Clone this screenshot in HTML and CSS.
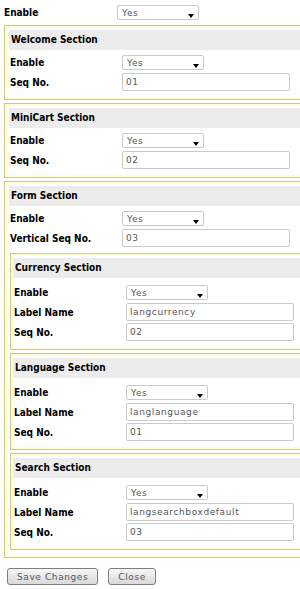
FILE: index.html
```html
<!DOCTYPE html>
<html lang="en">
<head>
  <meta charset="UTF-8">
  <title>Header Settings</title>
  <link rel="stylesheet" href="styles.css">
</head>
<body>
  <div class="page">
    <div class="row top">
      <label>Enable</label>
      <span class="select"><select><option>Yes</option></select></span>
    </div>

    <div class="section">
      <div class="band">Welcome Section</div>
      <div class="row">
        <label>Enable</label>
        <span class="select"><select><option>Yes</option></select></span>
      </div>
      <div class="row">
        <label>Seq No.</label>
        <input type="text" value="01">
      </div>
    </div>

    <div class="section">
      <div class="band">MiniCart Section</div>
      <div class="row">
        <label>Enable</label>
        <span class="select"><select><option>Yes</option></select></span>
      </div>
      <div class="row">
        <label>Seq No.</label>
        <input type="text" value="02">
      </div>
    </div>

    <div class="section">
      <div class="band">Form Section</div>
      <div class="row">
        <label>Enable</label>
        <span class="select"><select><option>Yes</option></select></span>
      </div>
      <div class="row">
        <label>Vertical Seq No.</label>
        <input type="text" value="03">
      </div>

      <div class="section sub">
        <div class="band">Currency Section</div>
        <div class="row">
          <label>Enable</label>
          <span class="select"><select><option>Yes</option></select></span>
        </div>
        <div class="row">
          <label>Label Name</label>
          <input type="text" value="langcurrency">
        </div>
        <div class="row">
          <label>Seq No.</label>
          <input type="text" value="02">
        </div>
      </div>

      <div class="section sub">
        <div class="band">Language Section</div>
        <div class="row">
          <label>Enable</label>
          <span class="select"><select><option>Yes</option></select></span>
        </div>
        <div class="row">
          <label>Label Name</label>
          <input type="text" value="langlanguage">
        </div>
        <div class="row">
          <label>Seq No.</label>
          <input type="text" value="01">
        </div>
      </div>

      <div class="section sub">
        <div class="band">Search Section</div>
        <div class="row">
          <label>Enable</label>
          <span class="select"><select><option>Yes</option></select></span>
        </div>
        <div class="row">
          <label>Label Name</label>
          <input type="text" value="langsearchboxdefault">
        </div>
        <div class="row">
          <label>Seq No.</label>
          <input type="text" value="03">
        </div>
      </div>
    </div>

    <div class="buttons">
      <button type="button">Save Changes</button>
      <button type="button">Close</button>
    </div>
  </div>
</body>
</html>
```

FILE: styles.css
```css
html {
  overflow: hidden;
}

body {
  margin: 0;
  background-color: #fff;
  font-family: "DejaVu Sans Condensed", "DejaVu Sans", sans-serif;
}

.page {
  width: 310px;
  padding: 2px 0 0 4px;
}

.row {
  display: flex;
  align-items: center;
  height: 20px;
  padding-left: 1px;
}

.row label {
  width: 112px;
  flex: none;
  font-size: 10px;
  font-weight: bold;
  font-stretch: condensed;
  color: #000;
}

.row.top {
  padding-left: 0;
}

.row.top label {
  width: 113px;
}

.select {
  position: relative;
  display: inline-block;
}

.select::after {
  content: "";
  position: absolute;
  right: 5px;
  top: 9px;
  border-left: 3.5px solid transparent;
  border-right: 3.5px solid transparent;
  border-top: 4px solid #000;
}

select,
input {
  box-sizing: border-box;
  font-family: "DejaVu Sans", sans-serif;
  font-size: 9px;
  letter-spacing: 0.6px;
  color: #555;
  background-color: #fff;
  border: 1px solid #c9c9c9;
  border-radius: 2px;
  outline: none;
  margin: 0;
}

select {
  -webkit-appearance: none;
  appearance: none;
  display: block;
  width: 82px;
  height: 15px;
  padding: 1px 4px 0;
  line-height: 12px;
}

input {
  width: 168px;
  height: 18px;
  padding: 0 3px;
}

.section {
  margin-top: 3px;
  padding: 4px 4px 7px 4px;
  border: 1px solid #c9c98f;
  box-shadow: inset 0 0 0 2px #ffffd0;
}

.page > .section:first-of-type {
  margin-top: 2px;
}

.band {
  height: 20px;
  line-height: 20px;
  padding-left: 2px;
  margin-bottom: 2px;
  background-color: #ececec;
  font-size: 10px;
  font-weight: bold;
  font-stretch: condensed;
  color: #000;
}

.section.sub {
  margin: 3px 0 0 1px;
  padding: 4px 2px 7px 2px;
}

.row + .section.sub {
  margin-top: 5px;
}

.section.sub .band {
  margin-bottom: 4px;
}

.buttons {
  display: flex;
  gap: 10px;
  margin-top: 10px;
  padding-left: 3px;
}

.buttons button {
  height: 17px;
  padding: 0 9px;
  font-family: "DejaVu Sans", sans-serif;
  font-size: 9px;
  letter-spacing: 0.6px;
  color: #555;
  background: linear-gradient(#f6f6f6, #d9d9d9);
  border: 1px solid #7d7d7d;
  border-radius: 3px;
  cursor: pointer;
}
```
